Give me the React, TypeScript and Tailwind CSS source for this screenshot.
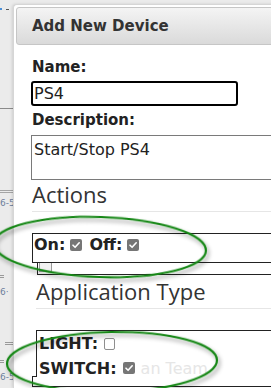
import React from "react";

function Checked() {
  return (
    <span className="inline-flex items-center justify-center w-[12px] h-[12px] rounded-[2px] bg-[#767676] align-middle">
      <svg width="10" height="10" viewBox="0 0 10 10">
        <path d="M2 5.2 L4.1 7.3 L8.2 2.8" fill="none" stroke="#fff" strokeWidth="1.6" strokeLinecap="round" strokeLinejoin="round" />
      </svg>
    </span>
  );
}

function Unchecked() {
  return <span className="inline-block w-[11px] h-[12px] rounded-[2px] border border-[#8f8f8f] bg-white align-middle" />;
}

export default function App() {
  return (
    <div className="relative w-[271px] h-[388px] overflow-hidden bg-[#ebebeb] flex font-['DejaVu_Sans',sans-serif]">
      {/* background page strip */}
      <div className="w-[13px] shrink-0 flex flex-col">
        <div className="mt-[8px] h-[2px] flex items-start">
          <div className="w-[2px] h-[2px] bg-[#4a8fd8]" />
          <div className="ml-[4px] mt-[1px] w-[3px] h-px bg-[#555]" />
        </div>
        <div className="mt-[98px] h-px bg-[#8a8a8a]" />
        <div className="mt-[81px] h-px bg-[#a5a5a5]" />
        <div className="mt-[1px] h-px bg-[#a5a5a5]" />
        <div className="mt-[5px] h-[10px] leading-[10px] text-[9px] text-[#6d7f9c] whitespace-nowrap">6-5</div>
        <div className="mt-[67px] w-[4px] h-px bg-[#9a9a9a]" />
        <div className="mt-[1px] w-[4px] h-px bg-[#9a9a9a]" />
        <div className="mt-[9px] h-[10px] leading-[10px] text-[9px] text-[#6d7f9c] whitespace-nowrap">6·</div>
        <div className="mt-[45px] ml-[5px] w-[8px] h-px bg-[#9a9a9a]" />
        <div className="mt-[1px] ml-[5px] w-[8px] h-px bg-[#9a9a9a]" />
        <div className="mt-[15px] w-[4px] h-px bg-[#9a9a9a]" />
        <div className="mt-[1px] w-[4px] h-px bg-[#9a9a9a]" />
        <div className="mt-[9px] h-[10px] leading-[10px] text-[9px] text-[#6d7f9c] whitespace-nowrap">6-5</div>
      </div>

      {/* modal */}
      <div className="shrink-0 w-[300px] mt-[4px] bg-white rounded-tl-[4px] border-l border-t border-[#d6d6d6] shadow-[-1px_0_3px_rgba(0,0,0,0.12)] flex flex-col">
        <div className="ml-[2px] mt-[2px] h-[38px] border border-[#c6c6c6] rounded-[3px] bg-gradient-to-b from-[#f4f4f4] to-[#dadada] flex items-center pl-[15px]">
          <span className="text-[15px] font-bold text-[#333]">Add New Device</span>
        </div>

        <div className="flex flex-col pl-[17px]">
          <div className="mt-[12px] h-[20px] leading-[20px] pl-[1px] text-[15px] font-bold text-[#222]">Name:</div>
          <div className="mt-[4px] w-[207px] h-[25px] border-2 border-black rounded-[3px] flex items-center pl-[1px] text-[16px] text-[#222]">PS4</div>
          <div className="mt-[4px] h-[20px] leading-[20px] pl-[1px] text-[15px] font-bold text-[#222]">Description:</div>
          <div className="mt-[5px] w-[242px] h-[45px] border border-[#7a7a7a] pl-[2px] pt-[4px] text-[16px] leading-[20px] text-[#222]">
            Start/Stop PS4
          </div>

          <div className="mt-[2px] h-[24px] leading-[24px] pl-[1px] text-[22px] text-[#333] font-['Open_Sans',sans-serif]">Actions</div>
          <div className="mt-[5px] ml-[1px] h-px bg-[#e6e6e6]" />

          <div className="mt-[21px] ml-[1px] h-[30px] border border-[#222] pt-[1px] pl-[1px] text-[16px] leading-[20px] font-bold text-[#222] flex items-center gap-[5px]">
            <span className="flex items-center gap-[5px] self-start">
              <span>On:</span>
              <Checked />
              <span className="ml-[2px]">Off:</span>
              <Checked />
            </span>
          </div>
          <div className="ml-[6px] h-[12px] border border-t-0 border-[#222] flex items-start pl-[1px]">
            <div className="w-[13px] h-[9px] border border-t-0 border-[#999] bg-[#f2f2f2]" />
          </div>

          <div className="pl-[5px] flex flex-col">
            <div className="mt-[4px] h-[24px] leading-[24px] text-[22px] text-[#333] font-['Open_Sans',sans-serif]">Application Type</div>
            <div className="mt-[5px] h-px bg-[#e6e6e6]" />
            <div className="mt-[21px] h-[47px] border border-b-0 border-[#222] flex flex-col text-[16px] font-bold text-[#222]">
              <div className="h-[25px] leading-[25px] pl-[2px] flex items-center gap-[6px]">
                <span>LIGHT:</span>
                <Unchecked />
              </div>
              <div className="h-[21px] leading-[25px] pl-[2px] flex items-start gap-[6px]">
                <span>SWITCH:</span>
                <span className="mt-[6px] flex"><Checked /></span>
                <span className="font-normal text-[#e6e6e6]">an Team</span>
              </div>
            </div>
          </div>
          <div className="-mt-px ml-[1px] flex">
            <div className="w-[5px] h-[11px] border-l border-t border-[#222]" />
          </div>
          <div className="-mt-px ml-[1px] h-px bg-[#222]" />
        </div>
      </div>

      {/* annotation ellipses */}
      <svg className="absolute inset-0 pointer-events-none" width="271" height="388" viewBox="0 0 271 388">
        <defs>
          <filter id="sh" x="-30%" y="-40%" width="160%" height="180%">
            <feDropShadow dx="2" dy="3" stdDeviation="2.2" floodColor="#000" floodOpacity="0.4" />
          </filter>
        </defs>
        <ellipse cx="100" cy="247" rx="106" ry="30" transform="rotate(2 100 247)" fill="none" stroke="#168716" strokeWidth="2.2" filter="url(#sh)" />
        <ellipse cx="112" cy="362" rx="105" ry="30" transform="rotate(-1 112 362)" fill="none" stroke="#168716" strokeWidth="2.2" filter="url(#sh)" />
      </svg>
    </div>
  );
}
